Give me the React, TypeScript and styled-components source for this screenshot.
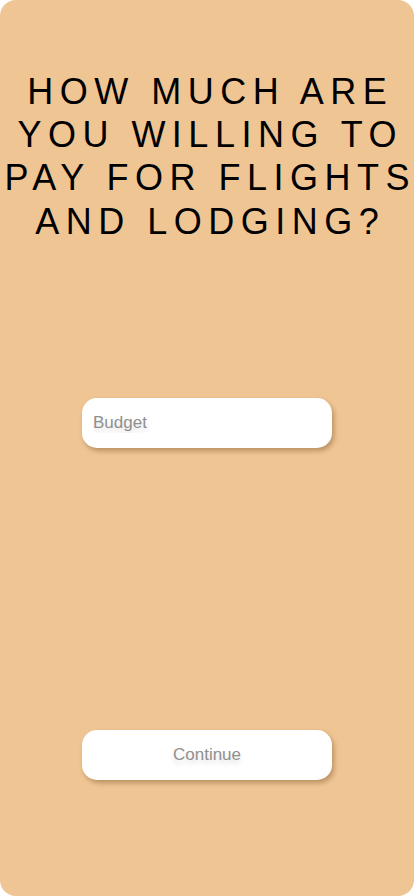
import React from "react";
import styled, { createGlobalStyle } from "styled-components";

const GlobalStyle = createGlobalStyle`
  html, body {
    margin: 0;
    padding: 0;
    background: #ffffff;
  }
  * { box-sizing: border-box; }
`;

const Screen = styled.div`
  width: 414px;
  height: 896px;
  background: #f0c594;
  border-radius: 16px;
  display: flex;
  flex-direction: column;
  align-items: center;
  padding-top: 70px;
  font-family: "Liberation Sans", Arial, Helvetica, sans-serif;
`;

const Title = styled.h1`
  margin: 0;
  width: 100%;
  display: flex;
  flex-direction: column;
  align-items: center;
  font-size: 36px;
  font-weight: 400;
  line-height: 43.2px;
  color: #000000;
  flex-shrink: 0;
`;

const TitleLine = styled.span`
  display: block;
  white-space: nowrap;
  letter-spacing: 6.5px;
  margin-right: -6.5px;
`;

const fieldBox = `
  width: 250px;
  height: 50px;
  background: #ffffff;
  border: none;
  border-radius: 15px;
  box-shadow: 2px 3px 5px rgba(90, 50, 10, 0.35);
  font-family: "Liberation Sans", Arial, Helvetica, sans-serif;
  font-size: 17px;
  color: #8f8f8f;
  outline: none;
`;

const BudgetInput = styled.input`
  ${fieldBox}
  margin-top: 155px;
  padding: 0 11px;
  &::placeholder {
    color: #8f8f8f;
    text-shadow: 0 4px 4px rgba(0, 0, 0, 0.12);
  }
`;

const ContinueButton = styled.button`
  ${fieldBox}
  margin-top: 282px;
  cursor: pointer;
  text-shadow: 0 4px 4px rgba(0, 0, 0, 0.12);
`;

const lines = ["HOW MUCH ARE", "YOU WILLING TO", "PAY FOR FLIGHTS", "AND LODGING?"];

export default function App() {
  return (
    <>
      <GlobalStyle />
      <Screen>
        <Title>
          {lines.map((l) => (
            <TitleLine key={l}>{l}</TitleLine>
          ))}
        </Title>
        <BudgetInput type="text" placeholder="Budget" />
        <ContinueButton type="button">Continue</ContinueButton>
      </Screen>
    </>
  );
}
